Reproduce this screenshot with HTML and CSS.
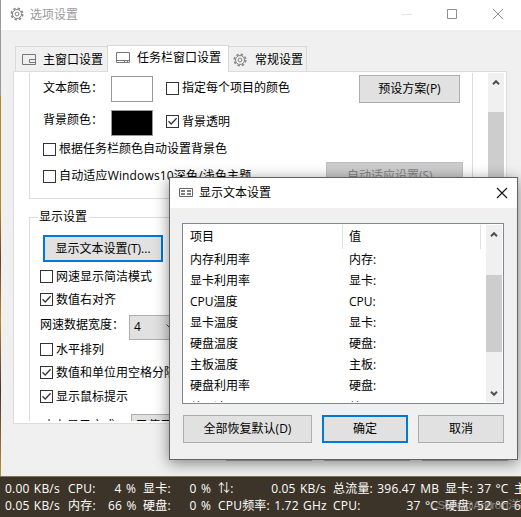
FILE: index.html
```html
<!DOCTYPE html>
<html lang="zh-CN">
<head>
<meta charset="utf-8">
<title>选项设置</title>
<link rel="stylesheet" href="styles.css">
</head>
<body>
<svg class="defs" width="0" height="0" aria-hidden="true">
  <symbol id="gear" viewBox="0 0 14 14"><g fill="none" stroke="currentColor"><circle cx="7" cy="7" r="5.7" stroke-width="1.6" stroke-dasharray="2.4 2.077"/><circle cx="7" cy="7" r="4.5"/><circle cx="7" cy="7" r="1.9"/></g></symbol>
  <symbol id="check" viewBox="0 0 13 13"><path d="M2.5 6.3 5.2 9 10.6 3.3" fill="none" stroke="#333" stroke-width="1.3"/></symbol>
  <symbol id="up" viewBox="0 0 8 7"><path d="M1 5.2 4 2.2 7 5.2" fill="none" stroke="#505050" stroke-width="2"/></symbol>
</svg>
<div class="desktop">
  <main class="window">
    <header class="titlebar">
      <svg class="gear"><use href="#gear"/></svg><span class="caption">选项设置</span>
      <svg class="controls" viewBox="0 0 102 12"><g fill="none" stroke="#8f8f8f"><path d="M0 6.5H10" stroke="#e3e3e3"/><path d="M45.500 1.500H54.500V10.500H45.500ZM91 1 101 11M101 1 91 11"/></g></svg>
    </header>
    <nav class="tabs">
      <div class="tab first"><svg viewBox="0 0 14 12"><path d="M.5 .5H13.500V10.500H.5ZM13 5.500H7.500V8.500H13" fill="none" stroke="#777"/></svg>主窗口设置</div>
      <div class="tab active"><svg viewBox="0 0 14 12"><path d="M.5 .5H13.500V10.500H.5ZM1 8.500H13M8.500 8V10M11.500 8V10" fill="none" stroke="#777"/></svg>任务栏窗口设置</div>
      <div class="tab last"><svg class="gear"><use href="#gear"/></svg>常规设置</div>
    </nav>
    <section class="panel">
      <div class="content">
        <div class="group colors">
          <div class="row r1"><span class="label">文本颜色：</span><i class="swatch"></i><i class="box"></i><span class="choice">指定每个项目的颜色</span><button class="preset">预设方案(P)</button></div>
          <div class="row r2"><span class="label">背景颜色：</span><i class="swatch black"></i><i class="box"><svg><use href="#check"/></svg></i><span class="choice">背景透明</span></div>
          <div class="row r3"><i class="box"></i><span>根据任务栏颜色自动设置背景色</span></div>
          <div class="row r4"><i class="box"></i><span>自动适应Windows10深色/浅色主题</span><button class="adapt" disabled>自动适应设置(S)...</button></div>
        </div>
        <fieldset class="group display">
          <legend>显示设置</legend>
          <button class="texts focus">显示文本设置(T)...</button>
          <div class="row"><i class="box"></i>网速显示简洁模式</div>
          <div class="row"><i class="box"><svg><use href="#check"/></svg></i>数值右对齐</div>
          <div class="row width"><span class="name">网速数据宽度：</span><span class="combo">4<svg viewBox="0 0 9 6"><path d="M.5 .5 4.500 4.500 8.500 .5" fill="none" stroke="#444"/></svg></span></div>
          <div class="row"><i class="box"></i>水平排列</div>
          <div class="row"><i class="box"><svg><use href="#check"/></svg></i>数值和单位用空格分隔</div>
          <div class="row hint"><i class="box"><svg><use href="#check"/></svg></i>显示鼠标提示</div>
          <div class="row memory">内存显示方式：<span class="combo">已使用</span></div>
        </fieldset>
      </div>
      <div class="scroll"><svg><use href="#up"/></svg><i></i></div>
    </section>
    <footer class="footer"><button></button><button></button><button></button></footer>
  </main>
  <div class="taskbar">
    <div class="stats"><span>0.00 KB/s</span><span>CPU:</span><span class="num">4 %</span><span>显卡:</span><span class="num">0 %</span><span>⇅:</span><span class="num">0.05 KB/s</span><span>总流量: 396.47 MB</span><span class="num"></span><span>显卡: 37 °C</span><span>主</span></div>
    <div class="stats"><span>0.05 KB/s</span><span>内存:</span><span class="num">66 %</span><span>硬盘:</span><span class="num">0 %</span><span>CPU频率: 1.72 GHz</span><span></span><span>CPU:</span><span class="num">37 °C</span><span>硬盘: 52 °C</span><span>6</span></div>
    <span class="mark">CSDN @Android洋芋</span>
  </div>
  <section class="dialog">
    <header class="dialog-title"><svg class="list-icon" viewBox="0 0 14 9"><path d="M.5 .5H13.500V8.500H.5Z" fill="none" stroke="#666"/><path d="M2 3H6M8 3H12M2 6H6M8 6H12" stroke="#555" stroke-width="1.6"/></svg><span>显示文本设置</span><svg class="close" viewBox="0 0 12 12"><path d="M1 1 11 11M11 1 1 11" stroke="#111" fill="none" stroke-width="1.1"/></svg></header>
    <div class="listbox">
      <div class="table">
        <div class="line head"><span>项目</span><span>值</span></div>
        <div class="line"><span>内存利用率</span><span>内存:</span></div>
        <div class="line"><span>显卡利用率</span><span>显卡:</span></div>
        <div class="line"><span>CPU温度</span><span>CPU:</span></div>
        <div class="line"><span>显卡温度</span><span>显卡:</span></div>
        <div class="line"><span>硬盘温度</span><span>硬盘:</span></div>
        <div class="line"><span>主板温度</span><span>主板:</span></div>
        <div class="line"><span>硬盘利用率</span><span>硬盘:</span></div>
        <div class="line"><span>总网速</span><span>⇅:</span></div>
      </div>
      <div class="scroll"><svg><use href="#up"/></svg><i></i><svg class="down"><use href="#up"/></svg></div>
    </div>
    <div class="actions"><button>全部恢复默认(D)</button><button class="focus">确定</button><button>取消</button></div>
  </section>
</div>
</body>
</html>
```

FILE: styles.css
```css
* { box-sizing: border-box; }
body { margin: 0; overflow: hidden; font: 12px/16px "Open Sans", "Noto Sans CJK SC", sans-serif; color: #000; }
.defs { position: absolute; }
svg, i { display: block; flex: none; }
.desktop { position: relative; width: 521px; height: 517px; overflow: hidden; white-space: nowrap; }
button { display: flex; align-items: center; justify-content: center; flex: none; padding: 0; font: inherit; color: #000; background: #e1e1e1; border: 1px solid #adadad; border-radius: 0; }
button.focus { border: 2px solid #0078d7; }
button:disabled { color: #838383; background: #ccc; border-color: #bfbfbf; }

.window { height: 476px; background: #f0f0f0; border-left: 1px solid #a8862f; border-image: linear-gradient(#999 0 96px, #ad8832 97px 210px, #713c25 260px, #b18b35 320px, #4d3030 390px, #ba9239) 1; }
.titlebar { display: flex; align-items: center; height: 30px; padding: 0 17px 2px 9px; background: #fff; color: #999; }
.gear { width: 14px; height: 14px; color: #858585; }
.caption { margin: 2px 0 0 6px; }
.controls { width: 102px; height: 12px; margin-left: auto; }

.tabs { display: flex; align-items: flex-end; height: 42px; padding-left: 14px; position: relative; z-index: 1; }
.tab { display: flex; align-items: center; height: 25px; border: 1px solid #d9d9d9; border-bottom: 0; margin-bottom: 1px; }
.tab svg { width: 14px; height: 12px; }
.tab svg.gear { height: 14px; }
.tab.first { width: 92px; padding: 1px 0 0 6px; gap: 7px; border-right: 0; }
.tab.active { width: 122px; height: 27px; margin: 0; padding: 0 0 2px 8px; gap: 7px; background: #fff; }
.tab.last { width: 78px; padding: 1px 0 0 4px; gap: 8px; border-left: 0; }
.panel { display: flex; justify-content: space-between; width: 494px; height: 353px; margin: -1px 0 0 12px; padding: 1px 2px 2px 15px; background: #fff; border: 1px solid #dcdcdc; }
.content { width: 444px; height: 348px; overflow: hidden; }
.row { display: flex; align-items: center; height: 23px; }
.group { margin: 0; padding: 0; min-width: 0; border: 1px solid #dcdcdc; }
.colors { height: 126px; border-top: 0; padding: 2px 0 0 13px; }
.box { width: 13px; height: 13px; margin-right: 3px; border: 1px solid #333; background: #fff; }
.box svg { width: 13px; height: 13px; margin: -1px; }
.label { width: 68px; margin-top: -2px; }
.swatch { width: 42px; height: 26px; margin-right: 13px; border: 1px solid #999; }
.swatch.black { background: #000; }
.r1 { height: 28px; padding-bottom: 1px; }
.r1 .box, .r1 .choice { margin-top: -1px; }
.r1 .choice { width: 177px; }
.preset { width: 101px; height: 28px; margin-top: 1px; }
.r2 { height: 38px; padding-top: 1px; }
.r2 .label { margin-top: -5px; }
.r2 .box, .r2 .choice { margin-top: -2px; }
.r3 { height: 24px; margin-top: -4px; }
.r4 { height: 28px; margin-top: 1px; }
.r4 span { width: 267px; letter-spacing: .16px; }
.adapt { width: 137px; height: 28px; }
.display { height: 230px; margin-top: 10px; padding-left: 10px; }
.display legend { height: 16px; margin-left: -2px; padding: 0 2px 0 1px; }
.texts { width: 120px; height: 27px; margin: 10px 0 3px 3px; }
.width { height: 27px; padding-top: 5px; }
.width .name { margin-top: -4px; }
.combo { display: flex; align-items: center; flex: none; width: 90px; height: 25px; padding-left: 4px; background: #e1e1e1; border: 1px solid #adadad; }
.combo svg { width: 9px; height: 6px; margin-left: 25px; }
.width .combo { margin-left: 5px; }
.hint { height: 24px; padding-top: 1px; }
.memory { height: 26px; margin-top: 5px; padding-left: 3px; }
.memory .combo { margin-left: 4px; }
.scroll { width: 16px; background: #f0f0f0; display: flex; flex-direction: column; align-items: center; }
.scroll svg { width: 8px; height: 7px; }
.scroll i { width: 100%; background: #cdcdcd; }
.panel .scroll svg { margin: 6px 0 26px; }
.panel .scroll i { height: 250px; }
.footer { display: flex; gap: 12px; padding: 9px 0 0 225px; }
.footer button { width: 86px; height: 28px; }

.taskbar { position: relative; height: 41px; padding-top: 3px; color: #fff; background: #3c3428; border-top: 1px solid #80745b; }
.stats { display: grid; grid-template-columns: 63px 40px 35px 37px 38px 40px 75px 56px 56px 69px 40px; height: 17px; padding-left: 5px; line-height: 17px; letter-spacing: .2px; word-spacing: 1px; }
.stats .num { text-align: right; padding-right: 7px; }
.mark { position: absolute; left: 430px; top: 20px; color: #c3c0bc99; font: 11.5px/16px "Liberation Sans", "Noto Sans CJK SC", sans-serif; letter-spacing: -.7px; }

.dialog { position: absolute; left: 169px; top: 177px; width: 349px; height: 283px; background: #f0f0f0; border: 1px solid #626262; box-shadow: 0 3px 14px #0007; }
.dialog-title { display: flex; align-items: center; height: 30px; padding: 0 9px 1px 9px; background: #fff; }
.list-icon { width: 14px; height: 9px; margin-right: 6px; }
.close { width: 12px; height: 12px; margin-left: auto; }
.listbox { display: flex; justify-content: space-between; width: 322px; height: 181px; margin: 15px 0 0 12px; padding: 1px; overflow: hidden; background: #fff; border: 1px solid #828790; }
.table { width: 297px; height: 177px; overflow: hidden; }
.line { display: grid; grid-template-columns: 159px 138px; height: 21px; line-height: 21px; }
.line span { padding-left: 6px; }
.line.head { height: 24px; line-height: 23px; }
.line:last-child { line-height: 24px; }
.head span { border-right: 1px solid #e0e0e0; }
.listbox .scroll { height: 177px; }
.listbox .scroll svg { margin: 6px 0 37px; }
.listbox .scroll i { height: 77px; }
.listbox .scroll .down { transform: scaleY(-1); margin: 38px 0 0; }
.actions { display: flex; gap: 10px; padding: 11px 0 0 13px; }
.actions button { width: 86px; height: 28px; }
.actions button:first-child { width: 129px; }
```
